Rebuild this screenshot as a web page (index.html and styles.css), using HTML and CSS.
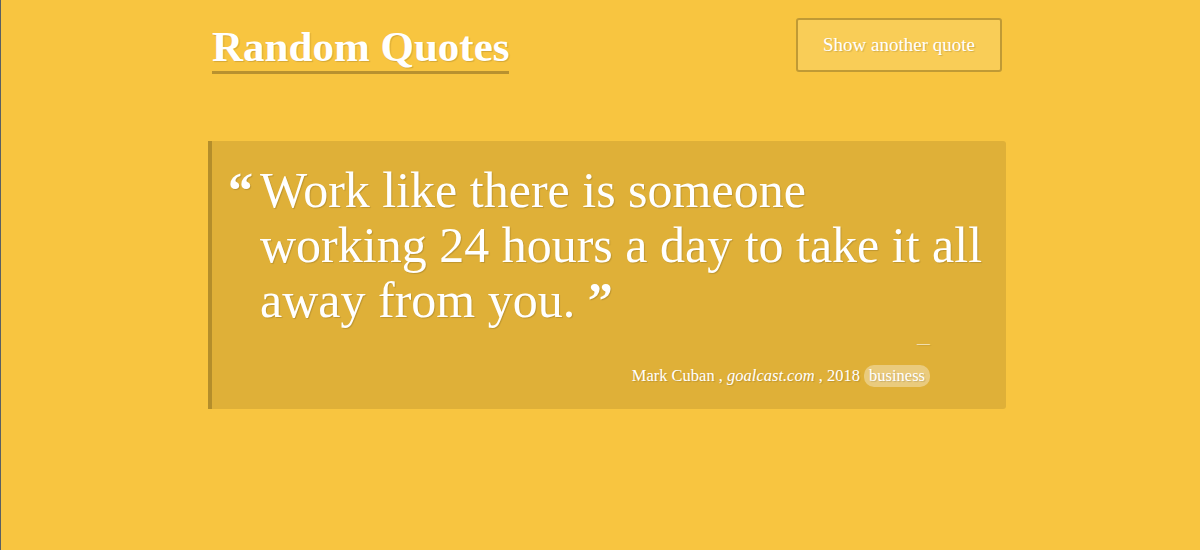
FILE: index.html
```html
<!DOCTYPE html>
<html lang="en">
<head>
<meta charset="utf-8">
<title>Random Quotes</title>
<link rel="stylesheet" href="styles.css">
</head>
<body>
<div class="wrap">
  <header class="header">
    <h1 class="title">Random Quotes</h1>
    <button class="btn" type="button">Show another quote</button>
  </header>
  <blockquote class="card">
    <div class="quote">
      <span class="open-mark">&ldquo;</span>
      <p class="quote-text">Work like there is someone<br>working 24 hours a day to take it all away from you. <span class="close-mark">&rdquo;</span></p>
    </div>
    <div class="dash">&mdash;</div>
    <footer class="attribution">
      <span class="author">Mark Cuban</span> , <cite class="source">goalcast.com</cite> , <span class="year">2018</span> <span class="tag">business</span>
    </footer>
  </blockquote>
</div>
</body>
</html>
```

FILE: styles.css
```css
html {
  background: #f8c540;
}
body {
  margin: 0;
  min-height: 550px;
  border-left: 1px solid #5b6062;
  font-family: "Liberation Serif", "Times New Roman", serif;
  color: #ffffff;
}
.wrap {
  width: 798px;
  margin-left: 207px;
}
.header {
  display: flex;
  justify-content: space-between;
  align-items: flex-start;
  padding: 18px 4px 0 4px;
}
.title {
  margin: 10px 0 0 0;
  font-size: 43px;
  font-weight: bold;
  line-height: 38px;
  padding-bottom: 5px;
  border-bottom: 3px solid #b8912f;
  text-shadow: 1px 1px 1px rgba(0, 0, 0, 0.15);
}
.btn {
  width: 206px;
  height: 54px;
  background: #f9cd57;
  border: 2px solid #c09a35;
  border-radius: 3px;
  color: #ffffff;
  font-family: "Liberation Serif", "Times New Roman", serif;
  font-size: 19px;
  text-shadow: 1px 1px 1px rgba(0, 0, 0, 0.15);
  cursor: pointer;
}
.card {
  margin: 67px 0 0 0;
  background: #dfb038;
  border-left: 4px solid #b48e2b;
  border-radius: 0 3px 3px 0;
  padding: 22px 16px 22px 16px;
  text-shadow: 1px 1px 1px rgba(0, 0, 0, 0.15);
}
.quote {
  display: flex;
  align-items: flex-start;
}
.open-mark {
  flex: 0 0 32px;
  font-size: 50px;
  line-height: 55px;
  font-weight: bold;
}
.quote-text {
  margin: 0;
  font-size: 50px;
  line-height: 55px;
  max-width: 730px;
}
.close-mark {
  font-weight: bold;
}
.dash {
  text-align: right;
  font-size: 13px;
  line-height: 16px;
  margin: 7px 60px 0 0;
}
.attribution {
  text-align: right;
  font-size: 16.5px;
  line-height: 22px;
  margin: 14px 60px 0 0;
}
.source {
  font-style: italic;
}
.tag {
  display: inline-block;
  background: rgba(255, 255, 255, 0.35);
  border-radius: 10px;
  padding: 0 5px;
  line-height: 22px;
}
```
